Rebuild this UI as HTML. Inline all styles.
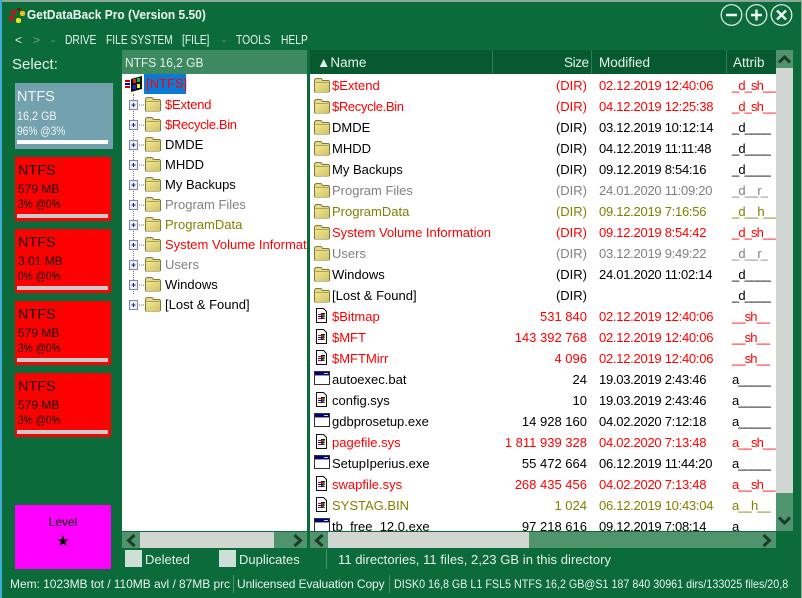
<!DOCTYPE html>
<html><head><meta charset="utf-8"><style>
html,body{margin:0;padding:0}
body{width:802px;height:598px;overflow:hidden;background:#0b6b3a;position:relative;font-family:"Liberation Sans",sans-serif;font-size:13px;color:#000}
.a{position:absolute;white-space:nowrap;line-height:16px}
.w{color:#e8f2ec}
.b{position:absolute}
.mn{font-size:13px;transform:scaleX(.79);transform-origin:0 0}
.list{position:absolute;left:310px;top:74px;width:466px;height:457px;background:#fff;overflow:hidden}
.tree{position:absolute;left:122px;top:74px;width:185px;height:457px;background:#fff;overflow:hidden}
.r{position:absolute;left:0;width:466px;height:21px;line-height:21px}
.r span{position:absolute;white-space:nowrap;top:0}
.r svg{position:absolute;left:4px;top:3px}
.n{left:22px}.s{right:189px}.m{left:289px;letter-spacing:-.27px}.t{left:422px;letter-spacing:-.9px}
.R{color:#f00}.G{color:#808080}.O{color:#808000}
.tr{position:absolute;left:0;width:185px;height:20px;line-height:20px}
.tr span{position:absolute;left:43px;white-space:nowrap;top:0}
.tr svg{position:absolute;left:7px;top:4px}
.pn{position:absolute;left:15px;width:96px;height:64px;background:#f00;color:#111}
.pn div{position:absolute;left:3px;white-space:nowrap;line-height:16px}
.pn .x{top:6px;font-size:14.5px}
.pn .y{top:24px;font-size:12px}
.pn .z{top:39px;font-size:12px;transform:scaleX(.85);transform-origin:0 0}
.bar{position:absolute;left:2px!important;width:91px;height:4px;background:#ccc;top:57px}
.hd{position:absolute;top:52px;height:22px;line-height:22px;color:#e8f2ec;white-space:nowrap;font-size:13.5px}
</style></head><body>
<svg width="0" height="0" style="position:absolute"><defs>
<linearGradient id="fg" x1="0" y1="0" x2="1" y2="1"><stop offset="0" stop-color="#f0e690"/><stop offset="1" stop-color="#d2c266"/></linearGradient>
<symbol id="fo" viewBox="0 0 16 15"><path d="M.5 13.500V2l1.500-1.500h5l1.500 2h6l1 1v10l-1 .5H1z" fill="#e6da86" stroke="#7c7a3a"/><path d="M1.500 5h13.500v9H1.500z" fill="url(#fg)"/><path d="M1.500 4.500h13" stroke="#a8a45a"/></symbol>
<symbol id="sy" viewBox="0 0 11 15"><path d="M.5.5h7l3 3v11H.5z" fill="#fff" stroke="#111"/><rect x="2" y="6" width="3" height="1" fill="#d00"/><rect x="2" y="8" width="3" height="1" fill="#00c"/><rect x="2" y="10" width="3" height="1" fill="#d00"/><rect x="5" y="5" width="4" height="6" fill="#111"/><rect x="5.500" y="6" width="1.500" height="2" fill="#e22"/><rect x="7.500" y="6" width="1.500" height="2" fill="#3c3"/><rect x="5.500" y="8.500" width="1.500" height="2" fill="#33e"/><rect x="7.500" y="8.500" width="1.500" height="2" fill="#ee3"/></symbol>
<symbol id="ex" viewBox="0 0 16 14"><rect x=".5" y=".5" width="15" height="13" fill="#fff" stroke="#333"/><rect x="1" y="1" width="14" height="3" fill="#000080"/><rect x="10" y="2" width="4" height="1" fill="#ccc"/><rect x="1" y="4" width="14" height="1" fill="#999"/></symbol>
<symbol id="pl" viewBox="0 0 34 12"><rect x=".5" y="1.500" width="8" height="9" fill="#eef" stroke="#7a8a9a"/><path d="M2.500 6h4M4.500 4v4" stroke="#1c2c80"/><path d="M10 6h6" stroke="#777" stroke-dasharray="1 1"/></symbol>
</defs></svg>

<div class="b" style="left:0;top:0;width:802px;height:2px;background:#8aa898"></div>
<div class="b" style="left:0;top:0;width:2px;height:598px;background:#3fa9d8"></div>
<div class="b" style="right:0;top:0;width:1px;height:598px;background:#8aa898"></div>

<svg class="b" style="left:8px;top:7px" width="18" height="17" viewBox="0 0 18 17"><rect x="3" y="3" width="5" height="5" fill="#c01818" rx="2"/><rect x="1" y="9" width="5" height="5" fill="#c01818" rx="2"/><rect x="9" y="1" width="4" height="3" fill="#7a2010"/><rect x="12" y="4" width="5" height="5" fill="#f0c010" rx="2"/><rect x="8" y="11" width="5" height="5" fill="#f4e010" rx="2"/></svg>
<div class="a" style="left:27px;top:7px;font-weight:bold;color:#f0f6f2;font-size:13px;transform:scaleX(.92);transform-origin:0 0">GetDataBack Pro (Version 5.50)</div>

<svg class="b" style="left:720px;top:4px" width="80" height="22" viewBox="0 0 80 22" fill="none" stroke="#f0f6f2"><circle cx="11.500" cy="11" r="10.300" stroke-width="1.200"/><circle cx="36.500" cy="11" r="10.300" stroke-width="1.200"/><circle cx="61.500" cy="11" r="10.300" stroke-width="1.200"/><path d="M6 11h11M31 11h11M36.500 5.500v11M57 6.500l9 9M66 6.500l-9 9" stroke-width="2.400"/></svg>

<div class="a w" style="left:15px;top:32px;font-size:12px">&lt;</div>
<div class="a" style="left:33px;top:32px;font-size:12px;color:#6fa58a">&gt;</div>
<div class="a" style="left:51px;top:32px;font-size:12px;color:#6fa58a">-</div>
<div class="a w mn" style="left:65px;top:32px">DRIVE</div>
<div class="a w mn" style="left:106px;top:32px">FILE SYSTEM</div>
<div class="a w mn" style="left:182px;top:32px">[FILE]</div>
<div class="a" style="left:222px;top:32px;font-size:12px;color:#6fa58a">-</div>
<div class="a w mn" style="left:236px;top:32px">TOOLS</div>
<div class="a w mn" style="left:281px;top:32px">HELP</div>

<div class="a w" style="left:12px;top:57px;font-size:15px">Select:</div>

<div class="b" style="left:15px;top:83px;width:98px;height:66px;background:#73a1ad;color:#eef4f4">
<div class="a" style="left:2px;top:6px;font-size:14.5px">NTFS</div>
<div class="a" style="left:2px;top:25px;font-size:12px;transform:scaleX(.9);transform-origin:0 0">16,2 GB</div>
<div class="a" style="left:2px;top:40px;font-size:12px;transform:scaleX(.85);transform-origin:0 0">96% @3%</div>
<div class="b" style="left:2px;top:57px;width:91px;height:4px;background:#fff"></div></div>

<div class="pn" style="top:157px"><div class="x">NTFS</div><div class="y">579 MB</div><div class="z">3% @0%</div><div class="bar"></div></div>
<div class="pn" style="top:229px"><div class="x">NTFS</div><div class="y">3,01 MB</div><div class="z">0% @0%</div><div class="bar"></div></div>
<div class="pn" style="top:301px"><div class="x">NTFS</div><div class="y">579 MB</div><div class="z">3% @0%</div><div class="bar"></div></div>
<div class="pn" style="top:373px"><div class="x">NTFS</div><div class="y">579 MB</div><div class="z">3% @0%</div><div class="bar"></div></div>

<div class="b" style="left:15px;top:505px;width:96px;height:64px;background:#f0f"><div class="a" style="left:0;width:96px;text-align:center;top:9px;font-size:12px">Level</div><div class="a" style="left:0;width:96px;text-align:center;top:29px;font-size:15px">★</div></div>

<div class="b" style="left:122px;top:50px;width:185px;height:24px;background:#3d8a60"></div>
<div class="a w" style="left:125px;top:55px;font-size:13px;transform:scaleX(.92);transform-origin:0 0">NTFS 16,2 GB</div>

<div class="tree">
<svg style="position:absolute;left:3px;top:2px" width="18" height="16" viewBox="0 0 18 16"><rect x="0" y="4" width="5" height="2" fill="#c00"/><rect x="0" y="7" width="5" height="2" fill="#00c"/><rect x="0" y="10" width="5" height="2" fill="#c00"/><path d="M6 3l11-3v13l-11 3z" fill="#111"/><rect x="8" y="3" width="3" height="4" fill="#e22"/><rect x="12" y="2" width="3" height="4" fill="#2b2"/><rect x="8" y="9" width="3" height="4" fill="#22e"/><rect x="12" y="8" width="3" height="4" fill="#ee2"/></svg>
<div class="b" style="left:22px;top:0;width:42px;height:20px;background:#0a7bd4;color:#f00;line-height:20px;text-indent:2px;white-space:nowrap">[NTFS]</div>
<div class="b" style="left:11px;top:20px;width:0;height:200px;border-left:1px dotted #777"></div>
<div class="tr R" style="top:21px"><svg width="34" height="12"><use href="#pl"/></svg><svg style="left:23px;top:2px" width="16" height="15"><use href="#fo"/></svg><span style="letter-spacing:-.2px">$Extend</span></div>
<div class="tr R" style="top:41px"><svg width="34" height="12"><use href="#pl"/></svg><svg style="left:23px;top:2px" width="16" height="15"><use href="#fo"/></svg><span style="letter-spacing:-.35px">$Recycle.Bin</span></div>
<div class="tr" style="top:61px"><svg width="34" height="12"><use href="#pl"/></svg><svg style="left:23px;top:2px" width="16" height="15"><use href="#fo"/></svg><span>DMDE</span></div>
<div class="tr" style="top:81px"><svg width="34" height="12"><use href="#pl"/></svg><svg style="left:23px;top:2px" width="16" height="15"><use href="#fo"/></svg><span>MHDD</span></div>
<div class="tr" style="top:101px"><svg width="34" height="12"><use href="#pl"/></svg><svg style="left:23px;top:2px" width="16" height="15"><use href="#fo"/></svg><span>My Backups</span></div>
<div class="tr G" style="top:121px"><svg width="34" height="12"><use href="#pl"/></svg><svg style="left:23px;top:2px" width="16" height="15"><use href="#fo"/></svg><span>Program Files</span></div>
<div class="tr O" style="top:141px"><svg width="34" height="12"><use href="#pl"/></svg><svg style="left:23px;top:2px" width="16" height="15"><use href="#fo"/></svg><span>ProgramData</span></div>
<div class="tr R" style="top:161px"><svg width="34" height="12"><use href="#pl"/></svg><svg style="left:23px;top:2px" width="16" height="15"><use href="#fo"/></svg><span>System Volume Information</span></div>
<div class="tr G" style="top:181px"><svg width="34" height="12"><use href="#pl"/></svg><svg style="left:23px;top:2px" width="16" height="15"><use href="#fo"/></svg><span>Users</span></div>
<div class="tr" style="top:201px"><svg width="34" height="12"><use href="#pl"/></svg><svg style="left:23px;top:2px" width="16" height="15"><use href="#fo"/></svg><span>Windows</span></div>
<div class="tr" style="top:221px"><svg width="34" height="12"><use href="#pl"/></svg><svg style="left:23px;top:2px" width="16" height="15"><use href="#fo"/></svg><span>[Lost &amp; Found]</span></div>
</div>

<div class="b" style="left:310px;top:50px;width:466px;height:24px;background:#075a30"></div>
<div class="b" style="left:492px;top:50px;width:1px;height:24px;background:#2f7c55"></div>
<div class="b" style="left:591px;top:50px;width:1px;height:24px;background:#2f7c55"></div>
<div class="b" style="left:726px;top:50px;width:1px;height:24px;background:#2f7c55"></div>
<div class="hd" style="left:317px">▲Name</div>
<div class="hd" style="left:564px;letter-spacing:-.4px">Size</div>
<div class="hd" style="left:599px">Modified</div>
<div class="hd" style="left:733px">Attrib</div>

<div class="list">
<div class="r R" style="top:1px"><svg width="16" height="15"><use href="#fo"/></svg><span class="n">$Extend</span><span class="s">(DIR)</span><span class="m">02.12.2019 12:40:06</span><span class="t">_d_sh__</span></div>
<div class="r R" style="top:22px"><svg width="16" height="15"><use href="#fo"/></svg><span class="n" style="letter-spacing:-.35px">$Recycle.Bin</span><span class="s">(DIR)</span><span class="m">04.12.2019 12:25:38</span><span class="t">_d_sh__</span></div>
<div class="r" style="top:43px"><svg width="16" height="15"><use href="#fo"/></svg><span class="n">DMDE</span><span class="s">(DIR)</span><span class="m">03.12.2019 10:12:14</span><span class="t">_d____</span></div>
<div class="r" style="top:64px"><svg width="16" height="15"><use href="#fo"/></svg><span class="n">MHDD</span><span class="s">(DIR)</span><span class="m">04.12.2019 11:11:48</span><span class="t">_d____</span></div>
<div class="r" style="top:85px"><svg width="16" height="15"><use href="#fo"/></svg><span class="n">My Backups</span><span class="s">(DIR)</span><span class="m">09.12.2019 8:54:16</span><span class="t">_d____</span></div>
<div class="r G" style="top:106px"><svg width="16" height="15"><use href="#fo"/></svg><span class="n">Program Files</span><span class="s">(DIR)</span><span class="m">24.01.2020 11:09:20</span><span class="t">_d__r_</span></div>
<div class="r O" style="top:127px"><svg width="16" height="15"><use href="#fo"/></svg><span class="n">ProgramData</span><span class="s">(DIR)</span><span class="m">09.12.2019 7:16:56</span><span class="t">_d__h__</span></div>
<div class="r R" style="top:148px"><svg width="16" height="15"><use href="#fo"/></svg><span class="n">System Volume Information</span><span class="s">(DIR)</span><span class="m">09.12.2019 8:54:42</span><span class="t">_d_sh__</span></div>
<div class="r G" style="top:169px"><svg width="16" height="15"><use href="#fo"/></svg><span class="n">Users</span><span class="s">(DIR)</span><span class="m">03.12.2019 9:49:22</span><span class="t">_d__r_</span></div>
<div class="r" style="top:190px"><svg width="16" height="15"><use href="#fo"/></svg><span class="n">Windows</span><span class="s">(DIR)</span><span class="m">24.01.2020 11:02:14</span><span class="t">_d____</span></div>
<div class="r" style="top:211px"><svg width="16" height="15"><use href="#fo"/></svg><span class="n">[Lost &amp; Found]</span><span class="s">(DIR)</span><span class="t">_d____</span></div>
<div class="r R" style="top:232px"><svg style="left:6px;top:2px" width="11" height="15"><use href="#sy"/></svg><span class="n">$Bitmap</span><span class="s">531 840</span><span class="m">02.12.2019 12:40:06</span><span class="t">__sh__</span></div>
<div class="r R" style="top:253px"><svg style="left:6px;top:2px" width="11" height="15"><use href="#sy"/></svg><span class="n">$MFT</span><span class="s">143 392 768</span><span class="m">02.12.2019 12:40:06</span><span class="t">__sh__</span></div>
<div class="r R" style="top:274px"><svg style="left:6px;top:2px" width="11" height="15"><use href="#sy"/></svg><span class="n">$MFTMirr</span><span class="s">4 096</span><span class="m">02.12.2019 12:40:06</span><span class="t">__sh__</span></div>
<div class="r" style="top:295px"><svg style="left:4px;top:2px" width="16" height="14"><use href="#ex"/></svg><span class="n">autoexec.bat</span><span class="s">24</span><span class="m">19.03.2019 2:43:46</span><span class="t">a_____</span></div>
<div class="r" style="top:316px"><svg style="left:6px;top:2px" width="11" height="15"><use href="#sy"/></svg><span class="n">config.sys</span><span class="s">10</span><span class="m">19.03.2019 2:43:46</span><span class="t">a_____</span></div>
<div class="r" style="top:337px"><svg style="left:4px;top:2px" width="16" height="14"><use href="#ex"/></svg><span class="n">gdbprosetup.exe</span><span class="s">14 928 160</span><span class="m">04.02.2020 7:12:18</span><span class="t">a_____</span></div>
<div class="r R" style="top:358px"><svg style="left:6px;top:2px" width="11" height="15"><use href="#sy"/></svg><span class="n">pagefile.sys</span><span class="s">1 811 939 328</span><span class="m">04.02.2020 7:13:48</span><span class="t">a__sh__</span></div>
<div class="r" style="top:379px"><svg style="left:4px;top:2px" width="16" height="14"><use href="#ex"/></svg><span class="n">SetupIperius.exe</span><span class="s">55 472 664</span><span class="m">06.12.2019 11:44:20</span><span class="t">a_____</span></div>
<div class="r R" style="top:400px"><svg style="left:6px;top:2px" width="11" height="15"><use href="#sy"/></svg><span class="n">swapfile.sys</span><span class="s">268 435 456</span><span class="m">04.02.2020 7:13:48</span><span class="t">a__sh__</span></div>
<div class="r O" style="top:421px"><svg style="left:6px;top:2px" width="11" height="15"><use href="#sy"/></svg><span class="n">SYSTAG.BIN</span><span class="s">1 024</span><span class="m">06.12.2019 10:43:04</span><span class="t">a__h__</span></div>
<div class="r" style="top:442px"><svg style="left:4px;top:2px" width="16" height="14"><use href="#ex"/></svg><span class="n">tb_free_12.0.exe</span><span class="s">97 218 616</span><span class="m">09.12.2019 7:08:14</span><span class="t">a_____</span></div>
</div>

<div class="b" style="left:776px;top:50px;width:17px;height:481px;background:#50946e"></div>
<div class="b" style="left:776px;top:68px;width:17px;height:425px;background:#d2d6d2"></div>
<svg class="b" style="left:778px;top:53px" width="13" height="12" viewBox="0 0 13 12"><path d="M1 9.500l5.500-5.500L12 9.500" fill="none" stroke="#1c3a2a" stroke-width="3"/></svg>
<svg class="b" style="left:778px;top:515px" width="13" height="12" viewBox="0 0 13 12"><path d="M1 2.500l5.500 5.500L12 2.500" fill="none" stroke="#1c3a2a" stroke-width="3"/></svg>

<div class="b" style="left:122px;top:532px;width:185px;height:16px;background:#50946e"></div>
<div class="b" style="left:140px;top:532px;width:134px;height:16px;background:#d2d6d2"></div>
<svg class="b" style="left:125px;top:534px" width="12" height="13" viewBox="0 0 12 13"><path d="M9.500 1L3.500 6.500 9.500 12" fill="none" stroke="#1c3a2a" stroke-width="3"/></svg>
<svg class="b" style="left:292px;top:534px" width="12" height="13" viewBox="0 0 12 13"><path d="M2.500 1l6 5.500-6 5.500" fill="none" stroke="#1c3a2a" stroke-width="3"/></svg>

<div class="b" style="left:310px;top:532px;width:466px;height:16px;background:#50946e"></div>
<div class="b" style="left:328px;top:532px;width:201px;height:16px;background:#d2d6d2"></div>
<svg class="b" style="left:313px;top:534px" width="12" height="13" viewBox="0 0 12 13"><path d="M9.500 1L3.500 6.500 9.500 12" fill="none" stroke="#1c3a2a" stroke-width="3"/></svg>
<svg class="b" style="left:761px;top:534px" width="12" height="13" viewBox="0 0 12 13"><path d="M2.500 1l6 5.500-6 5.500" fill="none" stroke="#1c3a2a" stroke-width="3"/></svg>

<div class="b" style="left:125px;top:550px;width:17px;height:17px;background:#cde0d5"></div>
<div class="a w" style="left:145px;top:552px">Deleted</div>
<div class="b" style="left:219px;top:550px;width:17px;height:17px;background:#cde0d5"></div>
<div class="a w" style="left:239px;top:552px">Duplicates</div>
<div class="b" style="left:326px;top:549px;width:1px;height:20px;background:#4a8f6a"></div>
<div class="a w" style="left:338px;top:552px;letter-spacing:.05px">11 directories, 11 files, 2,23 GB in this directory</div>

<div class="a w" style="left:10px;top:576px;font-size:12px;letter-spacing:-.05px">Mem: 1023MB tot / 110MB avl / 87MB prc</div>
<div class="b" style="left:233px;top:575px;width:1px;height:18px;background:#4a8f6a"></div>
<div class="a w" style="left:237px;top:576px;font-size:12px;letter-spacing:-.1px">Unlicensed Evaluation Copy</div>
<div class="b" style="left:389px;top:575px;width:1px;height:18px;background:#4a8f6a"></div>
<div class="a w" style="left:394px;top:576px;font-size:12px;transform:scaleX(.895);transform-origin:0 0">DISK0 16,8 GB L1 FSL5 NTFS 16,2 GB@S1 187 840 30961 dirs/133025 files/20,8</div>
</body></html>
